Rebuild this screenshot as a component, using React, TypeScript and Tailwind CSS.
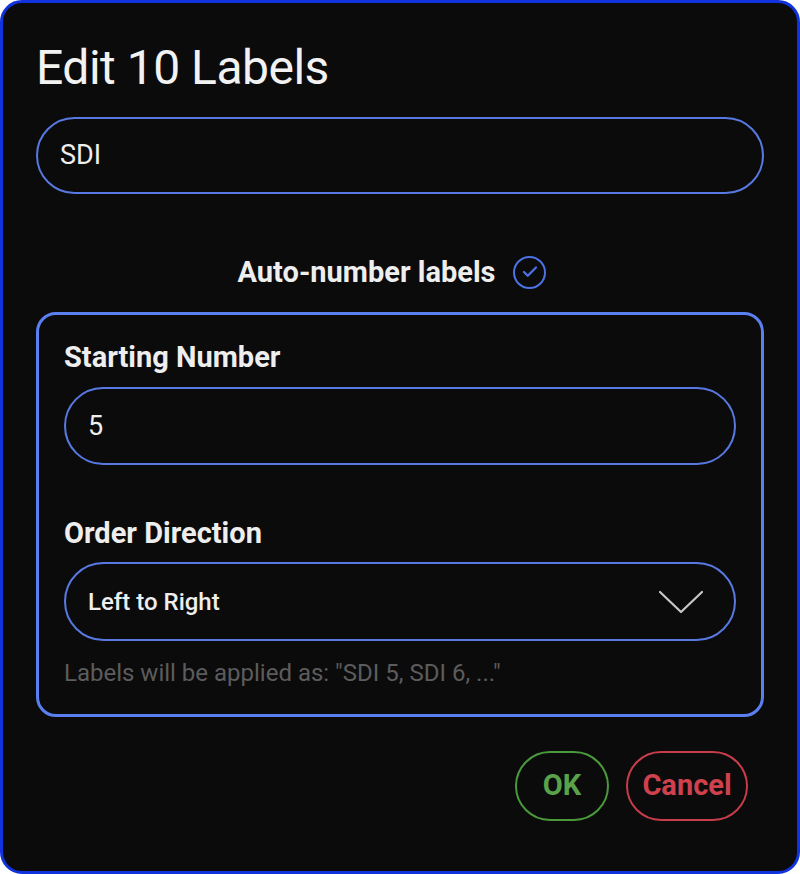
import { Check } from "lucide-react";

export default function App() {
  return (
    <div className="min-h-screen bg-white font-['Roboto',_sans-serif]">
      <div className="h-[874px] border-[3px] border-[#1133dd] rounded-[22px] bg-[#0b0b0c] px-[33px] pt-[37px] flex flex-col">
        <h1 className="text-[48px] leading-[56px] text-[#f2f2f2] font-normal tracking-[-0.5px]">
          Edit 10 Labels
        </h1>

        <div className="mt-[21px] h-[77px] rounded-full border-2 border-[#5879e2] px-[22px] flex items-center text-[27px] text-[#eeeeee]">
          SDI
        </div>

        <div className="mt-[61px] h-[34px] pr-[16px] flex items-center justify-center gap-[18px]">
          <span className="text-[29px] leading-[34px] font-bold text-[#eeeeee]">
            Auto-number labels
          </span>
          <span className="w-[33px] h-[33px] rounded-full border-[2.5px] border-[#4d72e6] flex items-center justify-center">
            <Check className="w-[18px] h-[18px] text-[#4d72e6]" strokeWidth={3} />
          </span>
        </div>

        <div className="mt-[23px] border-[3px] border-[#5a7ff0] rounded-[20px] px-[25px] pt-[25px] pb-[27px] flex flex-col">
          <label className="text-[29px] leading-[34px] font-bold text-[#eeeeee]">
            Starting Number
          </label>
          <div className="mt-[13px] h-[78px] rounded-full border-2 border-[#5879e2] px-[22px] flex items-center text-[27px] text-[#eeeeee]">
            5
          </div>

          <label className="mt-[51px] text-[29px] leading-[34px] font-bold text-[#eeeeee]">
            Order Direction
          </label>
          <div className="mt-[12px] h-[79px] rounded-full border-2 border-[#5879e2] pl-[22px] pr-[30px] flex items-center justify-between text-[24px] font-medium text-[#eeeeee]">
            <span>Left to Right</span>
            <svg width="46" height="26" viewBox="0 0 46 26" fill="none">
              <path d="M2 3 L23 23 L44 3" stroke="#c8c8c8" strokeWidth="2.2" strokeLinecap="round" strokeLinejoin="round" />
            </svg>
          </div>

          <p className="mt-[18px] text-[24px] leading-[28px] text-[#5c5c5c]">
            Labels will be applied as: "SDI 5, SDI 6, ..."
          </p>
        </div>

        <div className="mt-[34px] pr-[16px] flex justify-end gap-[17px]">
          <button className="w-[94px] h-[70px] rounded-full border-2 border-[#4a9a3c] text-[29px] font-bold text-[#5aa24a]">
            OK
          </button>
          <button className="w-[122px] h-[70px] rounded-full border-2 border-[#c73d4a] text-[29px] font-bold text-[#d0414e]">
            Cancel
          </button>
        </div>
      </div>
    </div>
  );
}
